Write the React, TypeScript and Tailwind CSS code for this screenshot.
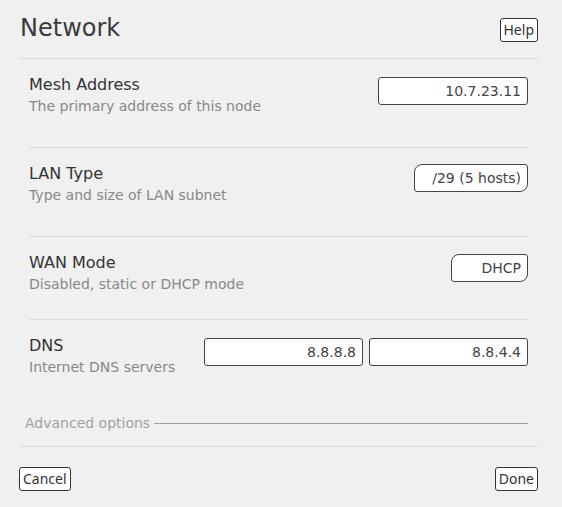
import React from "react";

const sans = "font-['DejaVu_Sans',sans-serif]";
const btnFont = "font-['Noto_Sans','DejaVu_Sans',sans-serif]";

interface RowProps {
  label: string;
  hint: string;
  className?: string;
  controlClass?: string;
  children?: React.ReactNode;
}

const Row: React.FC<RowProps> = ({ label, hint, className, controlClass, children }) => (
  <div className={`flex items-start justify-between border-t border-[#dcdcdc] pt-[16px] ${className}`}>
    <div>
      <div className="text-[16px] leading-[20px] text-[#333]">{label}</div>
      <div className="mt-[1px] text-[14px] leading-[20px] text-[#888]">{hint}</div>
    </div>
    <div className={`flex gap-[6px] ${controlClass}`}>{children}</div>
  </div>
);

const TextBox = ({ value, width }: { value: string; width: string }) => (
  <input
    readOnly
    value={value}
    className={`${width} h-[28px] rounded-[3px] border border-[#444] bg-white px-[6px] text-right text-[14px] text-[#444] outline-none ${sans}`}
  />
);

const Picker = ({ value, width }: { value: string; width: string }) => (
  <div
    className={`${width} flex h-[28px] items-center justify-end rounded-tl-[8px] rounded-br-[8px] rounded-tr-[3px] rounded-bl-[3px] border border-[#444] bg-white px-[6px] text-[14px] text-[#444]`}
  >
    {value}
  </div>
);

const SmallButton = ({ children }: { children: React.ReactNode }) => (
  <button
    className={`h-[24px] rounded-[3px] border border-[#333] bg-white px-[3px] text-[14px] leading-[20px] text-[#333] ${btnFont}`}
  >
    {children}
  </button>
);

export default function App() {
  return (
    <div className={`min-h-[507px] w-[562px] bg-[#f0f0f0] pl-[19px] pr-[24px] ${sans}`}>
      <div className="flex items-start justify-between pt-[14px] pb-[15px]">
        <h1 className="pl-[1px] text-[24px] leading-[29px] text-[#3a3a3a]">Network</h1>
        <div className="mt-[4px]">
          <SmallButton>Help</SmallButton>
        </div>
      </div>

      <div className="border-t border-[#dcdcdc]" />

      <div className="px-[10px]">
        <Row
          label="Mesh Address"
          hint="The primary address of this node"
          className="border-t-0 pb-[31px]"
          controlClass="mt-[2px]"
        >
          <TextBox value="10.7.23.11" width="w-[150px]" />
        </Row>
        <Row label="LAN Type" hint="Type and size of LAN subnet" className="pb-[31px]" controlClass="mt-0">
          <Picker value="/29 (5 hosts)" width="w-[114px]" />
        </Row>
        <Row label="WAN Mode" hint="Disabled, static or DHCP mode" className="pb-[25px]" controlClass="mt-[1px]">
          <Picker value="DHCP" width="w-[77px]" />
        </Row>
        <Row label="DNS" hint="Internet DNS servers" controlClass="mt-[2px]">
          <TextBox value="8.8.8.8" width="w-[159px]" />
          <TextBox value="8.8.4.4" width="w-[159px]" />
        </Row>
      </div>

      <div className="mt-[36px] mb-[13px] flex items-center pl-[6px] pr-[10px]">
        <span className="text-[14px] leading-[20px] text-[#a0a0a0]">Advanced options</span>
        <span className="ml-[4px] h-px flex-1 bg-[#a0a0a0]" />
      </div>

      <div className="flex justify-between border-t border-[#dcdcdc] pt-[20px]">
        <SmallButton>Cancel</SmallButton>
        <SmallButton>Done</SmallButton>
      </div>
    </div>
  );
}
